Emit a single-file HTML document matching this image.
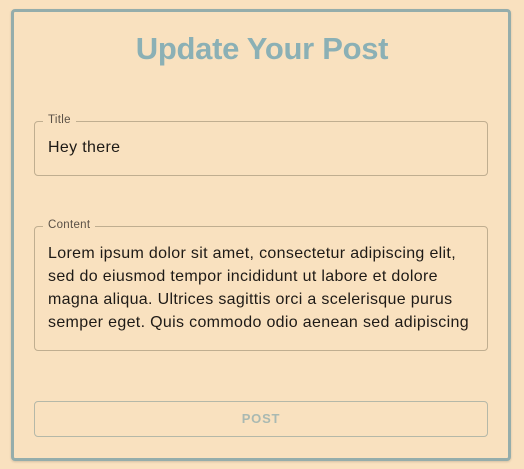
<!DOCTYPE html>
<html><head><style>
body{margin:0;width:524px;height:469px;background:#f9e1bf;font-family:"Liberation Sans",sans-serif;position:relative;overflow:hidden}
.card{position:absolute;left:11px;top:9px;width:494px;height:446px;border:3px solid #95adab;border-radius:4px;box-shadow:0 1px 2px rgba(0,0,0,.15)}
h1{position:absolute;left:0;right:0;top:31px;margin:0;text-align:center;font-size:31px;font-weight:bold;color:#8bb0b5;letter-spacing:-0.3px}
.f{position:absolute;left:34px;width:454px;border:1px solid #c0ae90;border-radius:4px;box-sizing:border-box}
.lab{position:absolute;left:8px;top:-8px;background:#f9e1bf;padding:0 5px;font-size:11.5px;color:#5a5046;letter-spacing:0.3px}
.txt{position:absolute;left:13px;color:#1e1a16;font-size:16px;letter-spacing:0.33px;white-space:nowrap}
.btn{position:absolute;left:34px;top:401px;width:454px;height:36px;border:1px solid #b5b8a8;border-radius:4px;box-sizing:border-box;text-align:center;line-height:34px;font-weight:bold;font-size:13px;color:#a9b9b2;letter-spacing:0.8px}
</style></head><body>
<div class="card"></div>
<h1>Update Your Post</h1>
<div class="f" style="top:121px;height:55px"><span class="lab">Title</span><div class="txt" style="top:17px">Hey there</div></div>
<div class="f" style="top:226px;height:125px"><span class="lab">Content</span><div class="txt" style="top:15px;line-height:23px">Lorem ipsum dolor sit amet, consectetur adipiscing elit,<br>sed do eiusmod tempor incididunt ut labore et dolore<br>magna aliqua. Ultrices sagittis orci a scelerisque purus<br>semper eget. Quis commodo odio aenean sed adipiscing</div></div>
<div class="btn">POST</div>
</body></html>
